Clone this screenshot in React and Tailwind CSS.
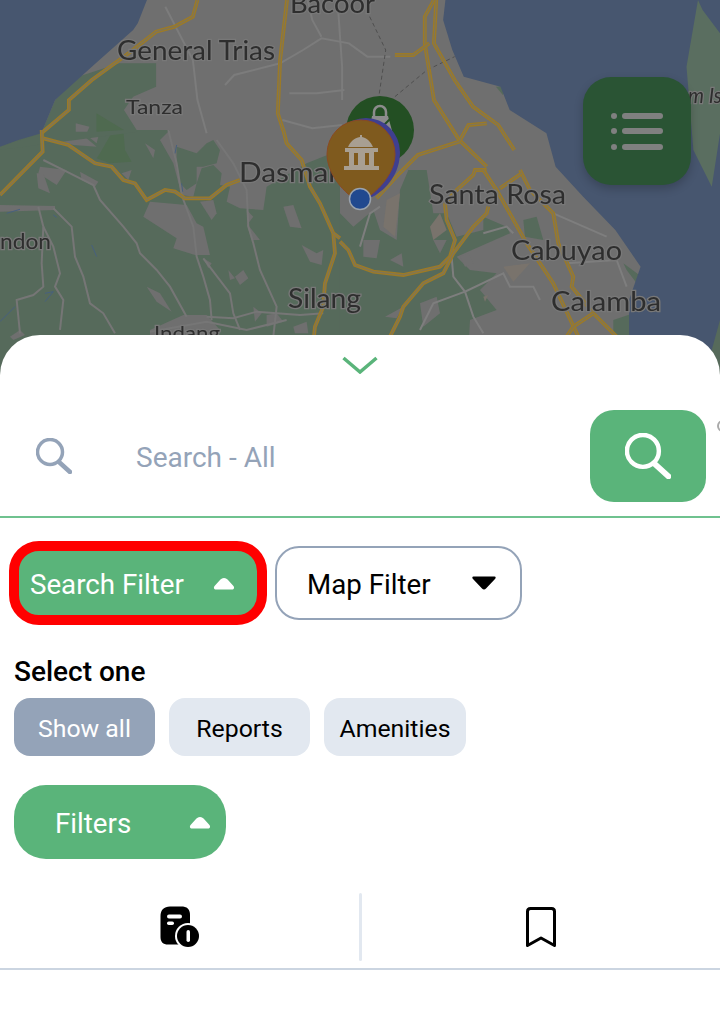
const font = { fontFamily: 'Roboto, sans-serif' };

const GREEN = '#566a5b';
const GRAY = '#6f6f6f';

// top of the map, coords taken from a 1568x1020 crop
const topGreens = [
  '0,440 90,400 120,300 170,230 260,190 340,190 340,260 290,290 270,330 300,395 0,450',
  '1000,190 1030,190 1010,220',
  '1080,260 1105,258 1095,285',
];
const topRoads = [
  '430,0 420,50 380,80 340,95 280,160 200,240 150,300 150,330 90,400',
  '625,0 610,180 605,340 617,392',
  '945,0 925,50 925,130 945,300 1000,420 1060,500',
  '950,0 945,130 990,240 1030,320 1085,375 1120,450',
  '860,165 900,165 935,130',
  '820,595 870,520 910,465 1000,425 1020,375 1060,370',
];
const topMinor = [
  '490,255 510,225 610,190 660,150 700,115 760,130 800,170 850,170',
  '735,0 745,200 745,300',
  '360,20 420,180 430,300 450,400',
  '630,280 690,280 750,270',
  '615,360 680,385 745,375',
  '670,0 680,60 700,110',
];

// south west quarter
const westPatches = [
  '130,0 230,0 290,50 220,45 130,15',
  '240,0 300,0 290,40',
  '120,110 200,120 170,165 115,130',
  '110,130 130,130 150,190 115,175',
  '240,125 295,155 285,170 245,150',
  '365,130 395,120 385,150',
  '435,40 465,60 460,85',
  '480,30 510,0 1020,0 1020,60 920,100 800,170 790,240 720,235 680,215 690,170 660,165 665,130 640,105 605,115 590,160 580,200 545,195 520,100',
  '430,260 450,215 560,225 590,280 610,290 630,375 585,375 520,355 530,325',
  '600,215 640,210 650,250 635,270',
  '740,240 760,260 745,280',
  '740,280 780,330 755,330',
  '850,230 880,225 905,295 870,290',
  '905,345 950,370 970,360 965,405 930,395',
  '685,420 705,445 690,450',
  '705,440 730,420 745,445 720,465',
  '440,470 480,490 515,545 470,515',
  '610,385 635,400 625,415',
  '450,600 550,555 620,555 660,600 640,630 450,630',
  '760,530 785,550 765,575',
  '800,555 830,550 850,575 800,590',
  '880,590 920,575 925,610 885,610',
  '0,225 165,228 165,240 0,245',
  '30,620 60,600 75,615 40,630',
];
const westFields = ['530,50 590,70 620,40 640,30 660,60 650,100 610,110 590,110 590,160 560,180 540,160 530,110'];
const westMinor = [
  '130,90 200,125 280,165 300,210 370,290 410,340 420,370 470,420 510,470 560,560',
  '505,0 530,100 545,195 580,290 590,380 610,440 630,510 635,570',
  '650,30 700,100 740,180 745,290 760,340 780,420 830,530 820,620',
  '115,230 130,290 125,400 130,470 100,495 50,510 60,610',
  '160,235 215,290 225,380 250,440 270,520 310,550 345,610',
  '130,290 160,350 180,430 165,470 190,510 180,600',
  '620,560 700,565 770,545 830,550 900,555 970,550',
  '450,605 620,575 740,600 860,570',
  '610,385 690,490 700,550 720,600',
];
const westRoads = [
  '125,0 128,65 0,195',
  '130,25 205,45 285,100 335,110 370,150 405,160 440,210 495,180 525,185 555,205 630,205 680,165 720,150',
  '850,0 860,40 905,90 930,170 960,220 1000,310 1005,370 975,460 970,530 945,590 940,640',
  '1000,310 1020,325',
];
const westWater = ['275,345 290,380', '530,45 525,70', '545,160 548,185', '20,250 60,238', '160,255 170,262', '135,490 160,485 135,515', '0,575 45,530'];

// south east quarter
const eastGreens = [
  '0,130 40,170 100,120 120,180 170,210 180,60 205,0 260,0 280,130 320,130 350,200 430,180 430,140 500,170 510,190 350,260 390,300 470,310 420,360 470,420 390,450 380,640 0,640',
  '550,150 590,140 610,210 555,200',
  '820,450 880,430 870,490 820,640',
  '850,280 905,320 890,340 860,300',
];
const eastPatches = ['150,270 185,250 190,290', '360,260 385,250 400,280 375,290', '70,210 120,210 110,265 70,260', '280,210 320,210 300,250', '135,440 190,410 170,445', '240,400 290,380 300,430 250,470'];
const eastBeige = ['140,90 180,70 165,200 130,170', '270,170 300,130 320,180 280,210', '490,290 570,280 520,335', '430,380 445,375 435,395'];
const eastRoads = [
  '315,100 320,150 345,210 330,260 300,290 190,315 100,305 45,285 25,240 0,215',
  '440,0 405,0 400,15 350,60 315,100',
  '445,110 440,130 400,170 340,250 310,310 250,340 190,410 180,440 150,500',
  '430,0 470,60 560,220 640,340 715,500',
  '540,0 570,60 640,130 655,220 700,320 695,350 760,430 830,500',
  '480,55 545,10',
  '760,430 700,470 680,500',
];
const eastMinor = [
  '335,260 340,320 375,365 490,310 510,350 580,350 600,390',
  '375,365 400,440 430,490',
  '375,365 280,400 240,480',
  '120,110 90,130 60,230',
  '640,130 800,200',
  '680,280 830,270 860,350',
  '430,190 500,170 520,190',
];

function Road({ points }) {
  return (
    <g>
      <polyline points={points} fill="none" stroke="#9c7a26" strokeWidth="3.800" vectorEffect="non-scaling-stroke" />
      <polyline points={points} fill="none" stroke="#7f7558" strokeWidth="1.200" vectorEffect="non-scaling-stroke" />
    </g>
  );
}

function Minor({ points, width = 2, color = '#767676' }) {
  return <polyline points={points} fill="none" stroke={color} strokeWidth={width} vectorEffect="non-scaling-stroke" />;
}

function MapLabel({ x, y, size, width, children, italic }) {
  return (
    <text
      x={x}
      y={y}
      fontSize={size}
      textLength={width}
      lengthAdjust="spacingAndGlyphs"
      fontFamily="Lato, sans-serif"
      fontStyle={italic ? 'italic' : 'normal'}
      fill="#2e2e2e"
      stroke="#787878"
      strokeWidth="2.500"
      paintOrder="stroke"
    >
      {children}
    </text>
  );
}

function pinPath(cx, top, r, tipX, tipY) {
  const cy = top + r;
  return `M${cx - r} ${cy} A${r} ${r} 0 0 1 ${cx + r} ${cy} C${cx + r} ${cy + 20} ${tipX + 16} ${tipY - 8} ${tipX} ${tipY} C${tipX - 16} ${tipY - 8} ${cx - r} ${cy + 20} ${cx - r} ${cy}z`;
}

function MapDrawing() {
  return (
    <svg width="720" height="380" viewBox="0 0 720 380" className="block blur-[0.6px]">
      <rect width="720" height="380" fill={GRAY} />

      <g transform="translate(0 130) scale(0.3333)">
        <rect width="1020" height="760" fill={GREEN} />
        {westPatches.map((p) => <polygon key={p} points={p} fill={GRAY} />)}
        {westFields.map((p) => <polygon key={p} points={p} fill={GREEN} />)}
        <polygon points="300,70 340,0 370,0 375,60 395,95 330,100 290,85" fill="#4f6a50" />
      </g>
      <g transform="translate(340 170) scale(0.3333)">
        {eastGreens.map((p) => <polygon key={p} points={p} fill={GREEN} />)}
        {eastPatches.map((p) => <polygon key={p} points={p} fill={GRAY} />)}
        {eastBeige.map((p) => <polygon key={p} points={p} fill="#79736c" />)}
      </g>

      <g transform="scale(0.4592 0.3333)">
        {topGreens.map((p) => <polygon key={p} points={p} fill={GREEN} />)}
        <polygon points="210,340 270,390 210,395" fill="#4f6a50" />
        <polygon points="165,370 195,380 190,395 165,395" fill={GRAY} />
        <polygon points="0,0 320,0 300,70 290,90 200,200 120,300 90,400 40,420 0,440" fill="#47566f" />
        <polygon points="970,0 965,60 985,150 1010,230 1090,260 1110,330 1190,400 1210,500 1270,590 1340,690 1395,800 1370,900 1370,1150 1568,1150 1568,0" fill="#47566f" />
        <polygon points="1520,0 1495,200 1510,450 1550,560 1568,400 1568,100 1530,30" fill="#5a6e60" />
        <polygon points="1530,1150 1568,960 1568,1150" fill={GREEN} />
        {topMinor.map((p) => <Minor key={p} points={p} color="#7c7c7c" />)}
        <polyline points="805,50 840,150 825,290" fill="none" stroke="#4f4f4f" strokeWidth="1" strokeDasharray="4 3" vectorEffect="non-scaling-stroke" />
        <polyline points="860,290 930,210 990,170" fill="none" stroke="#4f4f4f" strokeWidth="1" strokeDasharray="4 3" vectorEffect="non-scaling-stroke" />
        {topRoads.map((p) => <Road key={p} points={p} />)}
      </g>

      <g transform="translate(0 130) scale(0.3333)">
        {westMinor.map((p) => <Minor key={p} points={p} />)}
        {westWater.map((p) => <Minor key={p} points={p} width={1} color="#47607f" />)}
        {westRoads.map((p) => <Road key={p} points={p} />)}
      </g>
      <g transform="translate(340 170) scale(0.3333)">
        {eastMinor.map((p) => <Minor key={p} points={p} color="#7e7e7e" />)}
        {eastRoads.map((p) => <Road key={p} points={p} />)}
      </g>

      <MapLabel x={290} y={13} size={26} width={85}>Bacoor</MapLabel>
      <MapLabel x={117} y={60} size={26} width={158}>General Trias</MapLabel>
      <MapLabel x={126} y={114} size={20} width={57}>Tanza</MapLabel>
      <MapLabel x={239} y={182} size={26} width={100}>Dasmar</MapLabel>
      <MapLabel x={429} y={204} size={26} width={137}>Santa Rosa</MapLabel>
      <MapLabel x={0} y={249} size={21} width={51}>ndon</MapLabel>
      <MapLabel x={511} y={260} size={26} width={111}>Cabuyao</MapLabel>
      <MapLabel x={551} y={311} size={26} width={110}>Calamba</MapLabel>
      <MapLabel x={288} y={308} size={26} width={73}>Silang</MapLabel>
      <MapLabel x={154} y={340} size={20} width={66}>Indang</MapLabel>
      <MapLabel x={688} y={103} size={21} width={34} italic>m Is</MapLabel>

      <circle cx="380" cy="130" r="34" fill="#234f23" />
      <path d="M372 116 h16 l6 22 h-26 z" fill="#8c8c8c" />
      <path d="M374 116 v-4 a6 6 0 0 1 12 0 v4" fill="none" stroke="#8c8c8c" strokeWidth="2.500" />
      <path d="M381 128 l9 -9" stroke="#234f23" strokeWidth="2" />
      <path d={pinPath(366, 118, 34, 372, 197)} fill="#3f3f8f" />
      <path d={pinPath(361, 120, 34, 360, 202)} fill="#7f5a1e" stroke="#8a4a22" strokeWidth="1" />
      <path d="M360 135 v2 c-6 1 -10 5 -12 10 h25 c-2 -5 -6 -9 -11 -10 v-2z" fill="#a89f92" />
      <rect x="345" y="148" width="33" height="4" fill="#a89f92" />
      <rect x="349" y="152" width="25" height="14" fill="#a89f92" />
      <rect x="354" y="153" width="4" height="12" fill="#7f5a1e" />
      <rect x="365" y="153" width="4" height="12" fill="#7f5a1e" />
      <rect x="344" y="166" width="35" height="4" fill="#a89f92" />
      <circle cx="360" cy="199" r="10.500" fill="#21498f" stroke="#9aa3ae" strokeWidth="1.500" />
    </svg>
  );
}

function SearchIcon({ className, stroke, width = 3.5 }) {
  return (
    <svg viewBox="0 0 36 36" fill="none" className={className}>
      <circle cx="14" cy="14" r="12.500" stroke={stroke} strokeWidth={width} />
      <path d="M23 24 L34 34" stroke={stroke} strokeWidth={width + 1} strokeLinecap="round" />
    </svg>
  );
}

function CaretUp({ className, fill = 'white' }) {
  return (
    <svg viewBox="0 0 22 13" className={className}>
      <path d="M11 1 C13 1 14 2 15 3 L20 8.500 C22 10.500 21 12.500 19 12.500 H3 C1 12.500 0 10.500 2 8.500 L7 3 C8 2 9 1 11 1z" fill={fill} />
    </svg>
  );
}

function CaretDown({ className }) {
  return (
    <svg viewBox="0 0 24 14" className={className}>
      <path d="M1.500 0.500 H22.500 C24 0.500 24 2 23 3 L14 12.500 C12.800 13.800 11.200 13.800 10 12.500 L1 3 C0 2 0 0.500 1.500 0.500z" fill="black" />
    </svg>
  );
}

function ReportIcon() {
  return (
    <svg width="41" height="42" viewBox="0 0 41 42">
      <path d="M10 0.500 H21 C27 0.500 30 3 30 9 V34 C30 37 28 38.500 25 38.500 H8 C3 38.500 0.500 36 0.500 31 V10 C0.500 4 4 0.500 10 0.500z" fill="black" />
      <rect x="7" y="8.500" width="15" height="4" rx="2" fill="white" />
      <rect x="7" y="15.500" width="7" height="3.500" rx="1.750" fill="white" />
      <circle cx="28" cy="30" r="13" fill="white" />
      <circle cx="28" cy="30" r="11" fill="black" />
      <rect x="26.500" y="24" width="3.500" height="12" rx="1.750" fill="white" />
    </svg>
  );
}

function BookmarkIcon() {
  return (
    <svg width="30" height="41" viewBox="0 0 30 41" fill="none">
      <path d="M4.500 1.500 H25.500 C27.500 1.500 28.500 2.500 28.500 4.500 V38.500 L15 31 L1.500 38.500 V4.500 C1.500 2.500 2.500 1.500 4.500 1.500z" stroke="black" strokeWidth="3" strokeLinejoin="round" />
    </svg>
  );
}

export default function App() {
  return (
    <div className="relative w-[720px] h-[1015px] overflow-hidden bg-white" style={font}>
      <MapDrawing />

      <button className="absolute left-[583px] top-[77px] w-[108px] h-[108px] rounded-[28px] bg-[#2a5434] shadow-[0_4px_10px_rgba(0,0,0,0.2)] flex items-center justify-center">
        <svg width="52" height="38" viewBox="0 0 52 38" fill="#808080">
          <circle cx="3" cy="4" r="3" />
          <circle cx="3" cy="19" r="3" />
          <circle cx="3" cy="35" r="3" />
          <rect x="11" y="1" width="41" height="6" rx="3" />
          <rect x="11" y="16" width="41" height="6" rx="3" />
          <rect x="11" y="32" width="41" height="6" rx="3" />
        </svg>
      </button>

      <div className="relative -mt-[45px] h-[680px] bg-white rounded-t-[40px]">
        <div className="flex justify-center pt-[21px] h-[75px]">
          <svg width="36" height="18" viewBox="0 0 36 18" fill="none">
            <path d="M1.500 2 L18 16 L34.500 2" stroke="#5ab47a" strokeWidth="3.500" />
          </svg>
        </div>

        <div className="flex items-center h-[92px] pl-[36px] pr-[14px]">
          <SearchIcon className="w-[36px] h-[36px]" stroke="#94a3b8" />
          <span className="ml-[64px] flex-1 pt-[4px] text-[#94a3b8] text-[28px] leading-none">Search - All</span>
          <div className="w-[116px] h-[92px] rounded-[24px] bg-[#5ab47a] flex items-center justify-center">
            <SearchIcon className="w-[46px] h-[46px]" stroke="white" />
          </div>
        </div>
        <div className="absolute right-[-9px] top-[85px] w-[12px] h-[12px] rounded-full border-2 border-[#aaaaaa]" />

        <div className="mt-[14px] h-[2px] bg-[#6fc28f]" />

        <div className="flex items-center gap-[8px] pl-[9px] mt-[23px]">
          <div className="flex items-center justify-between w-[258px] h-[84px] pl-[11px] pr-[22px] border-[10px] border-[#ff0000] rounded-[30px] bg-[#5ab47a] text-white text-[27.7px]">
            <span className="pt-[4px]">Search Filter</span>
            <CaretUp className="w-[22px] h-[13px]" />
          </div>
          <div className="flex items-center justify-between w-[247px] h-[74px] pl-[30px] pr-[24px] border-2 border-[#94a3b8] rounded-[24px] bg-white text-black text-[27.7px]">
            <span className="pt-[4px]">Map Filter</span>
            <CaretDown className="w-[24px] h-[14px]" />
          </div>
        </div>

        <div className="pl-[14px] mt-[27px] text-black text-[28px] leading-[40px] font-medium">Select one</div>

        <div className="flex gap-[14px] pl-[14px] mt-[6px] text-[24.8px]">
          <div className="w-[141px] h-[58px] pt-[3px] rounded-[16px] bg-[#94a3b8] text-white flex items-center justify-center">Show all</div>
          <div className="w-[141px] h-[58px] pt-[3px] rounded-[16px] bg-[#e2e8f0] text-black flex items-center justify-center">Reports</div>
          <div className="w-[142px] h-[58px] pt-[3px] rounded-[16px] bg-[#e2e8f0] text-black flex items-center justify-center">Amenities</div>
        </div>

        <div className="ml-[14px] mt-[29px] flex items-center justify-between w-[212px] h-[74px] pl-[41px] pr-[15px] rounded-[32px] bg-[#5ab47a] text-white text-[27.7px]">
          <span className="pt-[4px]">Filters</span>
          <CaretUp className="w-[22px] h-[13px]" />
        </div>

        <div className="mt-[34px] flex items-center h-[68px]">
          <div className="flex-1 flex justify-center pl-[1px]"><ReportIcon /></div>
          <div className="w-[3px] h-[68px] rounded-full bg-[#e2e8f0]" />
          <div className="flex-1 flex justify-center"><BookmarkIcon /></div>
        </div>
        <div className="mt-[7px] h-[2px] bg-[#cbd5e1]" />
      </div>
    </div>
  );
}
